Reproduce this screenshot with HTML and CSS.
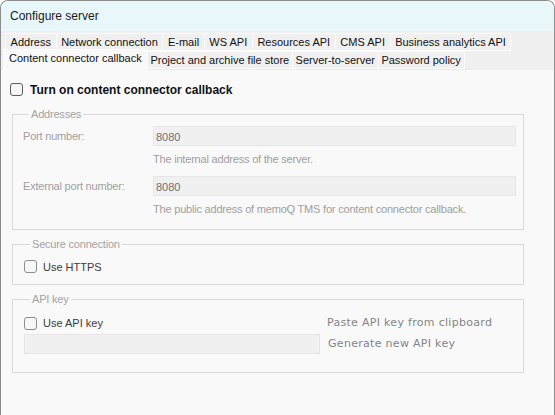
FILE: index.html
```html
<!DOCTYPE html>
<html>
<head>
<meta charset="utf-8">
<title>Configure server</title>
<link rel="stylesheet" href="styles.css">
</head>
<body>
<div class="window">
  <div class="titlebar">Configure server</div>
  <div class="tabstrip">
    <div class="tabrow row1">
      <div class="tab">Address</div>
      <div class="tab">Network connection</div>
      <div class="tab">E-mail</div>
      <div class="tab">WS API</div>
      <div class="tab">Resources API</div>
      <div class="tab">CMS API</div>
      <div class="tab">Business analytics API</div>
    </div>
    <div class="tabrow row2">
      <div class="tab selected">Content connector callback</div>
      <div class="tab">Project and archive file store</div>
      <div class="tab">Server-to-server</div>
      <div class="tab">Password policy</div>
    </div>
  </div>
  <div class="content">
    <div class="check main">
      <span class="box"></span>
      <span class="check-text">Turn on content connector callback</span>
    </div>

    <fieldset class="group addresses">
      <legend>Addresses</legend>
      <div class="field-grid">
        <div class="label">Port number:</div>
        <div class="input">8080</div>
        <div></div>
        <div class="desc">The internal address of the server.</div>
        <div class="label">External port number:</div>
        <div class="input">8080</div>
        <div></div>
        <div class="desc last">The public address of memoQ TMS for content connector callback.</div>
      </div>
    </fieldset>

    <fieldset class="group secure">
      <legend>Secure connection</legend>
      <div class="check">
        <span class="box light"></span>
        <span class="check-text small">Use HTTPS</span>
      </div>
    </fieldset>

    <fieldset class="group apikey">
      <legend>API key</legend>
      <div class="api-grid">
        <div class="check">
          <span class="box light"></span>
          <span class="check-text small">Use API key</span>
        </div>
        <div class="link">Paste API key from clipboard</div>
        <div class="input wide"></div>
        <div class="link gen">Generate new API key</div>
      </div>
    </fieldset>
  </div>
</div>
</body>
</html>
```

FILE: styles.css
```css
* {
  box-sizing: border-box;
}

html, body {
  margin: 0;
  padding: 0;
}

body {
  width: 555px;
  height: 415px;
  overflow: hidden;
  background: #f9f9f9;
  font-family: "Liberation Sans", Arial, sans-serif;
}

.window {
  height: 415px;
  border: 1px solid #8c8c8c;
  border-bottom: none;
  border-radius: 8px 8px 0 0;
  background: #f9f9f9;
  overflow: hidden;
}

.titlebar {
  height: 30px;
  background: #e8f7f9;
  font-size: 12px;
  line-height: 30px;
  padding-left: 9px;
  color: #1a1a1a;
}

.tabstrip {
  height: 39px;
  background: #f0f0f0;
  padding: 2px 0 0 4px;
  border-bottom: 1px solid #ececec;
}

.tabrow {
  display: flex;
  height: 18px;
}

.tab {
  font-size: 11px;
  line-height: 16px;
  height: 18px;
  color: #111;
  border: 1px solid #fbfbfb;
  margin-right: -1px;
  white-space: nowrap;
}

.row1 .tab {
  padding: 0 4.6px;
}

.row2 .tab {
  padding: 0 2.7px;
  line-height: 17px;
}

.row2 .tab.selected {
  position: relative;
  z-index: 1;
  height: 21px;
  margin: -2px -1px -1px -2px;
  padding: 0 5px;
  line-height: 17px;
  background: #f9f9f9;
  border-color: #fbfbfb;
  border-bottom-color: #f9f9f9;
}

.content {
  padding: 13px 0 0 9px;
}

.check {
  display: flex;
  align-items: center;
  height: 13px;
}

.box {
  width: 13px;
  height: 13px;
  border: 1px solid #5e5e5e;
  border-radius: 3px;
  background: #f7f7f7;
  flex: none;
}

.box.light {
  border-color: #8e8e8e;
}

.check-text {
  margin-left: 7px;
  font-size: 12px;
  font-weight: bold;
  color: #111;
  line-height: 14px;
  white-space: nowrap;
}

.check-text.small {
  margin-left: 6px;
  font-size: 11px;
  font-weight: normal;
  color: #3c3c3c;
}

.group {
  margin: 0 0 0 2px;
  width: 512px;
  border: 1px solid #dadada;
  min-inline-size: 0;
}

.group legend {
  padding: 0 2px;
  margin-left: 6px;
  font-size: 11px;
  line-height: 14px;
  color: #a3a3a3;
  letter-spacing: -0.2px;
}

.addresses {
  margin-top: 11px;
  padding: 5px 7px 13px 10px;
}

.secure {
  margin-top: 7px;
  padding: 9px 7px 11px 11px;
}

.apikey {
  margin-top: 7px;
  padding: 10px 7px 18px 11px;
}

.field-grid {
  display: grid;
  grid-template-columns: 130px 363px;
}

.label {
  font-size: 11px;
  line-height: 20px;
  color: #a0a0a0;
  letter-spacing: -0.2px;
  white-space: nowrap;
}

.input {
  height: 20px;
  background: #f0f0f0;
  border: 1px solid #e6e6e6;
  padding: 1px 0 0 2px;
  font-size: 11px;
  line-height: 18px;
  color: #6f6f6f;
}

.desc {
  margin: 6px 0 10px;
  font-size: 11px;
  line-height: 14px;
  color: #a0a0a0;
  letter-spacing: -0.2px;
  white-space: nowrap;
}

.desc.last {
  margin-bottom: 0;
}

.api-grid {
  display: grid;
  grid-template-columns: 296px 1fr;
  column-gap: 7px;
  row-gap: 4px;
  align-items: center;
}

.input.wide {
  width: 296px;
}

.link {
  font-family: "DejaVu Sans", Verdana, sans-serif;
  font-size: 11px;
  line-height: 14px;
  letter-spacing: 0.3px;
  color: #858585;
  white-space: nowrap;
}

.link.gen {
  padding-left: 1px;
}
```
